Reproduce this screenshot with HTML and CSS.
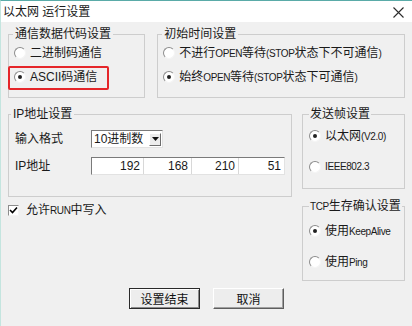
FILE: index.html
```html
<!DOCTYPE html>
<html lang="zh-CN">
<head>
    <meta charset="UTF-8">
    <title>以太网 运行设置</title>
    <link rel="stylesheet" href="styles.css">
</head>
<body>
    <div class="window">
        <div class="titlebar">
            <span class="title">以太网 运行设置</span>
            <svg class="close" width="11" height="11" viewBox="0 0 11 11">
                <path d="M0.5 0.5 L10.5 10.5 M10.5 0.5 L0.5 10.5" stroke="#2b2b2b" stroke-width="1.1" fill="none"/>
            </svg>
        </div>

        <div class="panel">
            <div class="row-top">
                <fieldset class="group g-code">
                    <legend>通信数据代码设置</legend>
                    <label class="opt"><span class="radio"></span><span>二进制码通信</span></label>
                    <label class="opt"><span class="radio on"></span><span>ASCII码通信</span><span class="highlight"></span></label>
                </fieldset>
                <fieldset class="group g-time">
                    <legend>初始时间设置</legend>
                    <label class="opt"><span class="radio"></span><span>不进行<span class="lat">OPEN</span>等待<span class="lat">(STOP</span>状态下不可通信<span class="lat">)</span></span></label>
                    <label class="opt"><span class="radio on"></span><span>始终<span class="lat">OPEN</span>等待<span class="lat">(STOP</span>状态下可通信<span class="lat">)</span></span></label>
                </fieldset>
            </div>

            <div class="row-mid">
                <div class="col-left">
                    <fieldset class="group g-ip">
                        <legend>IP地址设置</legend>
                        <div class="field">
                            <span class="field-label">输入格式</span>
                            <div class="select">
                                <span class="select-value">10进制数</span>
                                <span class="select-btn">
                                    <svg width="7" height="4" viewBox="0 0 7 4"><path d="M0 0 H7 L3.5 4 Z" fill="#111"/></svg>
                                </span>
                            </div>
                        </div>
                        <div class="field">
                            <span class="field-label">IP地址</span>
                            <div class="ip">
                                <span class="octet">192</span>
                                <span class="octet">168</span>
                                <span class="octet">210</span>
                                <span class="octet">51</span>
                            </div>
                        </div>
                    </fieldset>
                    <label class="check">
                        <span class="checkbox">
                            <svg width="9" height="9" viewBox="0 0 9 9"><path d="M1 4 L3.5 6.5 L8 1.5" stroke="#000" stroke-width="1.6" fill="none"/></svg>
                        </span>
                        <span>允许<span class="lat">RUN</span>中写入</span>
                    </label>
                </div>

                <div class="col-right">
                    <fieldset class="group g-frame">
                        <legend>发送帧设置</legend>
                        <label class="opt"><span class="radio on"></span><span>以太网<span class="lat">(V2.0)</span></span></label>
                        <label class="opt"><span class="radio"></span><span class="lat">IEEE802.3</span></label>
                    </fieldset>
                    <fieldset class="group g-tcp">
                        <legend><span class="lat">TCP</span>生存确认设置</legend>
                        <label class="opt"><span class="radio on"></span><span>使用<span class="lat">KeepAlive</span></span></label>
                        <label class="opt"><span class="radio"></span><span>使用<span class="lat">Ping</span></span></label>
                    </fieldset>
                </div>
            </div>

            <div class="actions">
                <button class="btn btn-default">设置结束</button>
                <button class="btn">取消</button>
            </div>
        </div>
    </div>
</body>
</html>
```

FILE: styles.css
```css
body {
    margin: 0;
    padding: 0;
    background: #f0f0f0;
    font-family: 'Liberation Sans', 'Noto Sans CJK SC', sans-serif;
    font-size: 12px;
    line-height: 16px;
    color: #1a1a1a;
}

.window {
    width: 412px;
    height: 326px;
    box-sizing: border-box;
    border-top: 1px solid #5aaba8;
    border-left: 1px solid #c4e5df;
    background: #f0f0f0;
}

.titlebar {
    height: 21px;
    background: #fff;
    display: flex;
    align-items: center;
    justify-content: space-between;
    padding: 0 8px 0 2px;
}

.close {
    margin-top: 1px;
}

.panel {
    padding: 4px 7px 0 7px;
}

/* group boxes */
.group {
    margin: 0;
    min-width: 0;
    box-sizing: border-box;
    border: 1px solid #cdcdcd;
    padding: 3px 5px 12px 5px;
}

.group legend {
    padding: 0 2px;
    margin-left: -1px;
    line-height: 16px;
    white-space: nowrap;
}

.row-top {
    display: flex;
    gap: 12px;
}

.g-code {
    width: 138px;
    display: flex;
    flex-direction: column;
    gap: 8px;
}

.g-time {
    width: 249px;
    display: flex;
    flex-direction: column;
    gap: 8px;
}

.opt {
    display: flex;
    align-items: center;
    height: 16px;
    gap: 4px;
    white-space: nowrap;
    position: relative;
}

.lat {
    font-size: 10px;
    letter-spacing: -0.4px;
}

.radio {
    width: 12px;
    height: 12px;
    box-sizing: border-box;
    border-radius: 50%;
    border: 1px solid;
    border-color: #8c8c8c #f4f4f4 #f4f4f4 #8c8c8c;
    background: #fff;
    display: flex;
    align-items: center;
    justify-content: center;
    flex: none;
}

.radio.on::after {
    content: '';
    width: 4px;
    height: 4px;
    border-radius: 50%;
    background: #222;
}

.highlight {
    position: absolute;
    left: -6px;
    top: -3px;
    width: 101px;
    height: 24px;
    box-sizing: border-box;
    border: 2.5px solid #e5262a;
    border-radius: 2px;
}

.row-mid {
    display: flex;
    gap: 10px;
    margin-top: 8px;
}

.col-left {
    width: 286px;
}

.col-right {
    width: 103px;
    display: flex;
    flex-direction: column;
    gap: 9px;
}

.g-ip {
    padding: 8px 6px 21px 6px;
    display: flex;
    flex-direction: column;
    gap: 9px;
}

.g-ip legend {
    margin-left: -4px;
}

.field {
    display: flex;
    align-items: center;
    height: 18px;
}

.field-label {
    width: 76px;
}

.select {
    width: 72px;
    height: 18px;
    box-sizing: border-box;
    border: 1px solid;
    border-color: #7a7a7a #e2e2e2 #e2e2e2 #7a7a7a;
    background: #fff;
    display: flex;
    align-items: center;
    justify-content: space-between;
    padding: 0 1px 0 2px;
}

.select-btn {
    width: 12px;
    height: 13px;
    box-sizing: border-box;
    border: 1px solid;
    border-color: #fff #6d6d6d #6d6d6d #fff;
    background: #ececec;
    display: flex;
    align-items: center;
    justify-content: center;
}

.ip {
    width: 194px;
    height: 18px;
    box-sizing: border-box;
    border: 1px solid;
    border-color: #7a7a7a #e2e2e2 #e2e2e2 #7a7a7a;
    background: #fff;
    display: grid;
    grid-template-columns: 52px 48px 47px 1fr;
}

.octet {
    text-align: right;
    padding-right: 3px;
    border-right: 1px solid #d8d8d8;
    line-height: 16px;
}

.octet:last-child {
    border-right: none;
}

.check {
    display: flex;
    align-items: center;
    gap: 7px;
    height: 16px;
    margin-top: 5px;
}

.checkbox {
    width: 11px;
    height: 11px;
    box-sizing: border-box;
    border: 1px solid;
    border-color: #8c8c8c #f4f4f4 #f4f4f4 #8c8c8c;
    background: #fff;
    display: flex;
    align-items: center;
    justify-content: center;
}

.g-frame {
    padding: 6px 6px 13px 6px;
    display: flex;
    flex-direction: column;
    gap: 15px;
}

.g-tcp {
    padding: 8px 6px 10px 6px;
    display: flex;
    flex-direction: column;
    gap: 15px;
}

.g-frame legend,
.g-tcp legend {
    margin-left: 0;
    padding: 0 1px;
}

.actions {
    display: flex;
    justify-content: center;
    gap: 13px;
    margin-top: 7px;
}

.btn {
    width: 71px;
    height: 21px;
    box-sizing: border-box;
    font-family: inherit;
    font-size: 12px;
    color: #111;
    background: #ededed;
    border: 1px solid;
    border-color: #fff #5e5e5e #5e5e5e #fff;
    box-shadow: inset -1px -1px 0 #a0a0a0;
    padding: 0;
}

.btn-default {
    border: 1px solid #2a2a2a;
    box-shadow: inset 1px 1px 0 #fff, inset -1px -1px 0 #8a8a8a;
}
```
